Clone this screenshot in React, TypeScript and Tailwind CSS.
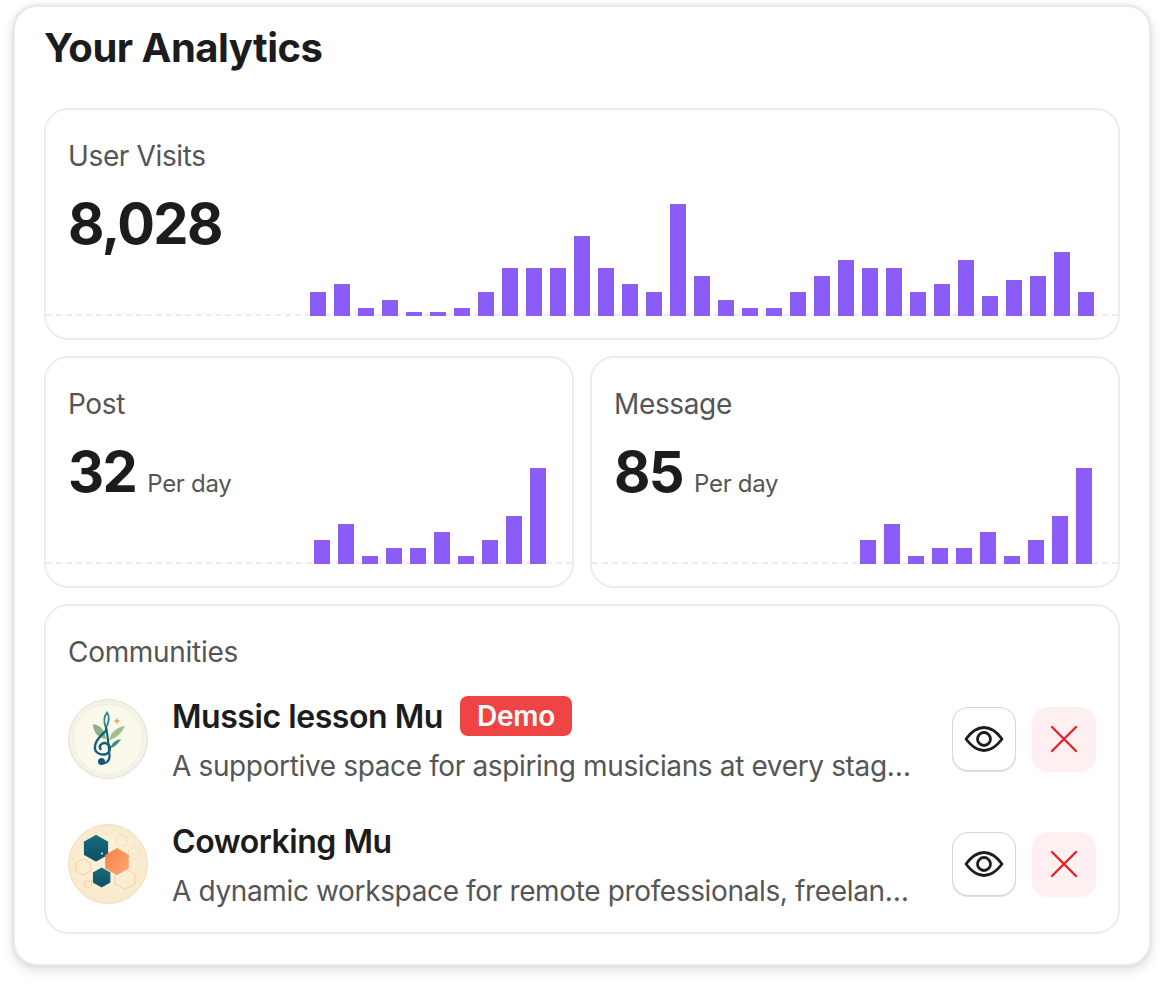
import type { ReactNode } from "react";

const font = { fontFamily: 'Inter, "Liberation Sans", sans-serif' };

const visits = [24, 32, 8, 16, 4, 4, 8, 24, 48, 48, 48, 80, 48, 32, 24, 112, 40, 16, 8, 8, 24, 40, 56, 48, 48, 24, 32, 56, 20, 36, 40, 64, 24];
const small = [24, 40, 8, 16, 16, 32, 8, 24, 48, 96];

function Bars({ data }: { data: number[] }) {
  return (
    <div className="flex items-end gap-2">
      {data.map((h, i) => (
        <div key={i} className="w-4 bg-[#8b5cf6]" style={{ height: h }} />
      ))}
    </div>
  );
}

function Stat({ label, value, unit, data, wide }: { label: string; value: string; unit?: string; data: number[]; wide?: boolean }) {
  return (
    <div className="relative h-[232px] overflow-hidden rounded-[24px] border-2 border-[#ececf1] bg-white">
      <div className="absolute left-0 right-0 bottom-[22px] border-t-2 border-dashed border-[#ececf1]" />
      <div className={wide ? "absolute right-[24px] bottom-[22px]" : "absolute right-[26px] bottom-[22px]"}>
        <Bars data={data} />
      </div>
      <div className="pl-[22px] pt-[28px]">
        <div className="text-[28px] leading-[36px] tracking-[-0.36px] text-[#555555]">{label}</div>
        <div className="mt-[18px] flex items-baseline gap-[11px]">
          <span className="text-[56px] leading-[64px] font-bold tracking-[-1.6px] text-[#1c1c1c]">{value}</span>
          {unit && <span className="text-[24px] leading-[32px] tracking-[-0.3px] text-[#555555]">{unit}</span>}
        </div>
      </div>
    </div>
  );
}

function EyeBtn() {
  return (
    <button className="flex h-[64px] w-[64px] items-center justify-center rounded-[16px] border border-[#d6d6d6] bg-white shadow-[0_1px_1px_rgba(0,0,0,0.14)]">
      <svg width="40" height="40" viewBox="0 0 40 40" fill="none" stroke="#1c1c1c" strokeWidth="2.8" strokeLinecap="round" strokeLinejoin="round">
        <path d="M2 20C7.5 12.5 13.5 8.5 20 8.5C26.5 8.5 32.5 12.5 38 20C32.5 27.5 26.5 31.5 20 31.5C13.5 31.5 7.5 27.5 2 20Z" />
        <circle cx="20" cy="20" r="6.5" />
      </svg>
    </button>
  );
}

function XBtn() {
  return (
    <button className="flex h-[64px] w-[64px] items-center justify-center rounded-[16px] bg-[#fef0f0] shadow-[0_1px_1px_rgba(220,38,38,0.08)]">
      <svg width="28" height="28" viewBox="0 0 28 28" fill="none" stroke="#e5242a" strokeWidth="2.4" strokeLinecap="round">
        <path d="M2 2L26 26M26 2L2 26" />
      </svg>
    </button>
  );
}

function MusicLogo() {
  return (
    <svg width="80" height="80" viewBox="0 0 80 80" className="shrink-0">
      <circle cx="40" cy="40" r="39.5" fill="#f4f1e6" stroke="#e2e0d8" />
      <circle cx="40" cy="40" r="34" fill="#fbf8ec" />
      <path d="M49 18.5L50 21L52.5 22L50 23L49 25.5L48 23L45.5 22L48 21Z" fill="#e8ab4e" />
      <path d="M25 25C32 26 37 31 38 40C30 39 25 33 25 25Z" fill="#8cb583" />
      <path d="M57 27C53 35 47 40 41 41C43 33 49 28 57 27Z" fill="#9cc08e" />
      <path d="M53 40C50 45 47 48 42.5 49C44 43 48 41 53 40Z" fill="#3f9279" />
      <path d="M39 13.5C35.5 18 35.5 23 38 29C41 23 42.5 18 39 13.5Z" fill="none" stroke="#2c8a80" strokeWidth="1.8" />
      <path d="M38 29C40 38 41 50 41.5 57C41.8 63 36 66 32.5 63" fill="none" stroke="#126178" strokeWidth="2.2" strokeLinecap="round" />
      <path d="M38.5 31C34 36 28 40 27 47C26 53 31 56 36 55.5C42 55 44 48 39.5 45C35.5 42.5 30 46 32.5 50" fill="none" stroke="#126178" strokeWidth="2.4" strokeLinecap="round" />
      <circle cx="33.5" cy="62.5" r="3.5" fill="#0f5a70" />
    </svg>
  );
}

function CoworkLogo() {
  return (
    <svg width="80" height="80" viewBox="0 0 80 80" className="shrink-0">
      <defs>
        <linearGradient id="teal" x1="0" y1="0" x2="0" y2="1">
          <stop offset="0" stopColor="#156b7c" />
          <stop offset="1" stopColor="#0c5164" />
        </linearGradient>
        <linearGradient id="orange" x1="0" y1="0" x2="1" y2="1">
          <stop offset="0" stopColor="#fb7f48" />
          <stop offset="1" stopColor="#fdaa74" />
        </linearGradient>
        <radialGradient id="bgc" cx="0.5" cy="0.45" r="0.55">
          <stop offset="0" stopColor="#fcf3de" />
          <stop offset="1" stopColor="#f8e9c9" />
        </radialGradient>
      </defs>
      <circle cx="40" cy="40" r="39.5" fill="url(#bgc)" stroke="#e8dfca" />
      <g fill="none" stroke="#f4c6a4" strokeWidth="0.8">
        <path d="M15.3 35L22.5 39V47L15.3 51L8 47V39Z" />
        <path d="M57 45L67 50V60L57 65.5L47 60V50Z" />
        <path d="M20 56L23.5 58V62L20 64L16.5 62V58Z" />
      </g>
      <g fill="none" stroke="#f1dfc2" strokeWidth="1">
        <path d="M54 10.5L59.5 13.5V19.5L54 22.5L48.5 19.5V13.5Z" />
        <path d="M66 23L71.5 26V32L66 35L60.5 32V26Z" />
      </g>
      <path d="M28 11.5L39.5 18V30.5L28 37L16.5 30.5V18Z" fill="url(#teal)" stroke="url(#teal)" strokeWidth="1.2" strokeLinejoin="round" />
      <path d="M33.7 44.2L41.8 48.8V58.2L33.7 62.8L25.5 58.2V48.8Z" fill="url(#teal)" stroke="url(#teal)" strokeWidth="1.2" strokeLinejoin="round" />
      <path d="M49 24.8L60.2 31.3V44.2L49 50.5L37.8 44.2V31.3Z" fill="url(#orange)" stroke="url(#orange)" strokeWidth="1.2" strokeLinejoin="round" />
      <circle cx="34" cy="29.5" r="1" fill="#f5efe0" />
    </svg>
  );
}

function Row({ logo, name, demo, desc }: { logo: ReactNode; name: string; demo?: boolean; desc: string }) {
  return (
    <div className="flex h-[109px] items-center">
      {logo}
      <div className="ml-[24px] w-[745px] min-w-0 pt-[5px]">
        <div className="flex items-center gap-[17px]">
          <span className="text-[32px] leading-[40px] font-semibold tracking-[-0.44px] text-[#1c1c1c]">{name}</span>
          {demo && (
            <span className="-translate-y-px rounded-[8px] bg-[#ef4444] px-[17px] text-[28px] leading-[40px] font-semibold tracking-[-0.25px] text-white">Demo</span>
          )}
        </div>
        <div className="mt-[9px] truncate text-[28px] leading-[40px] tracking-[-0.36px] text-[#555555]">{desc}</div>
      </div>
      <div className="ml-auto flex gap-[16px]">
        <EyeBtn />
        <XBtn />
      </div>
    </div>
  );
}

export default function App() {
  return (
    <div className="h-[987px] w-[1164px] overflow-hidden bg-white pl-[13px] pt-[5px]" style={font}>
      <div className="h-[961px] w-[1138px] rounded-[24px] border-2 border-[#e9e9ee] bg-white px-[29px] shadow-[0_4px_12px_rgba(60,60,90,0.18),0_0_3px_rgba(60,60,90,0.12)]">
        <h1 className="mt-[19px] text-[40px] leading-[44px] font-bold tracking-[-0.5px] text-[#1c1c1c]">Your Analytics</h1>
        <div className="mt-[38px] flex flex-col gap-[16px]">
          <Stat label="User Visits" value="8,028" data={visits} wide />
          <div className="grid grid-cols-2 gap-[16px]">
            <Stat label="Post" value="32" unit="Per day" data={small} />
            <Stat label="Message" value="85" unit="Per day" data={small} />
          </div>
          <div className="h-[330px] rounded-[24px] border-2 border-[#ececf1] bg-white px-[22px] pt-[28px]">
            <div className="text-[28px] leading-[36px] tracking-[-0.3px] text-[#555555]">Communities</div>
            <div className="mt-[14px]">
              <Row logo={<MusicLogo />} name="Mussic lesson Mu" demo desc="A supportive space for aspiring musicians at every stage of their journey" />
              <div className="mt-[16px]">
                <Row logo={<CoworkLogo />} name="Coworking Mu" desc="A dynamic workspace for remote professionals, freelancers and founders" />
              </div>
            </div>
          </div>
        </div>
      </div>
    </div>
  );
}
